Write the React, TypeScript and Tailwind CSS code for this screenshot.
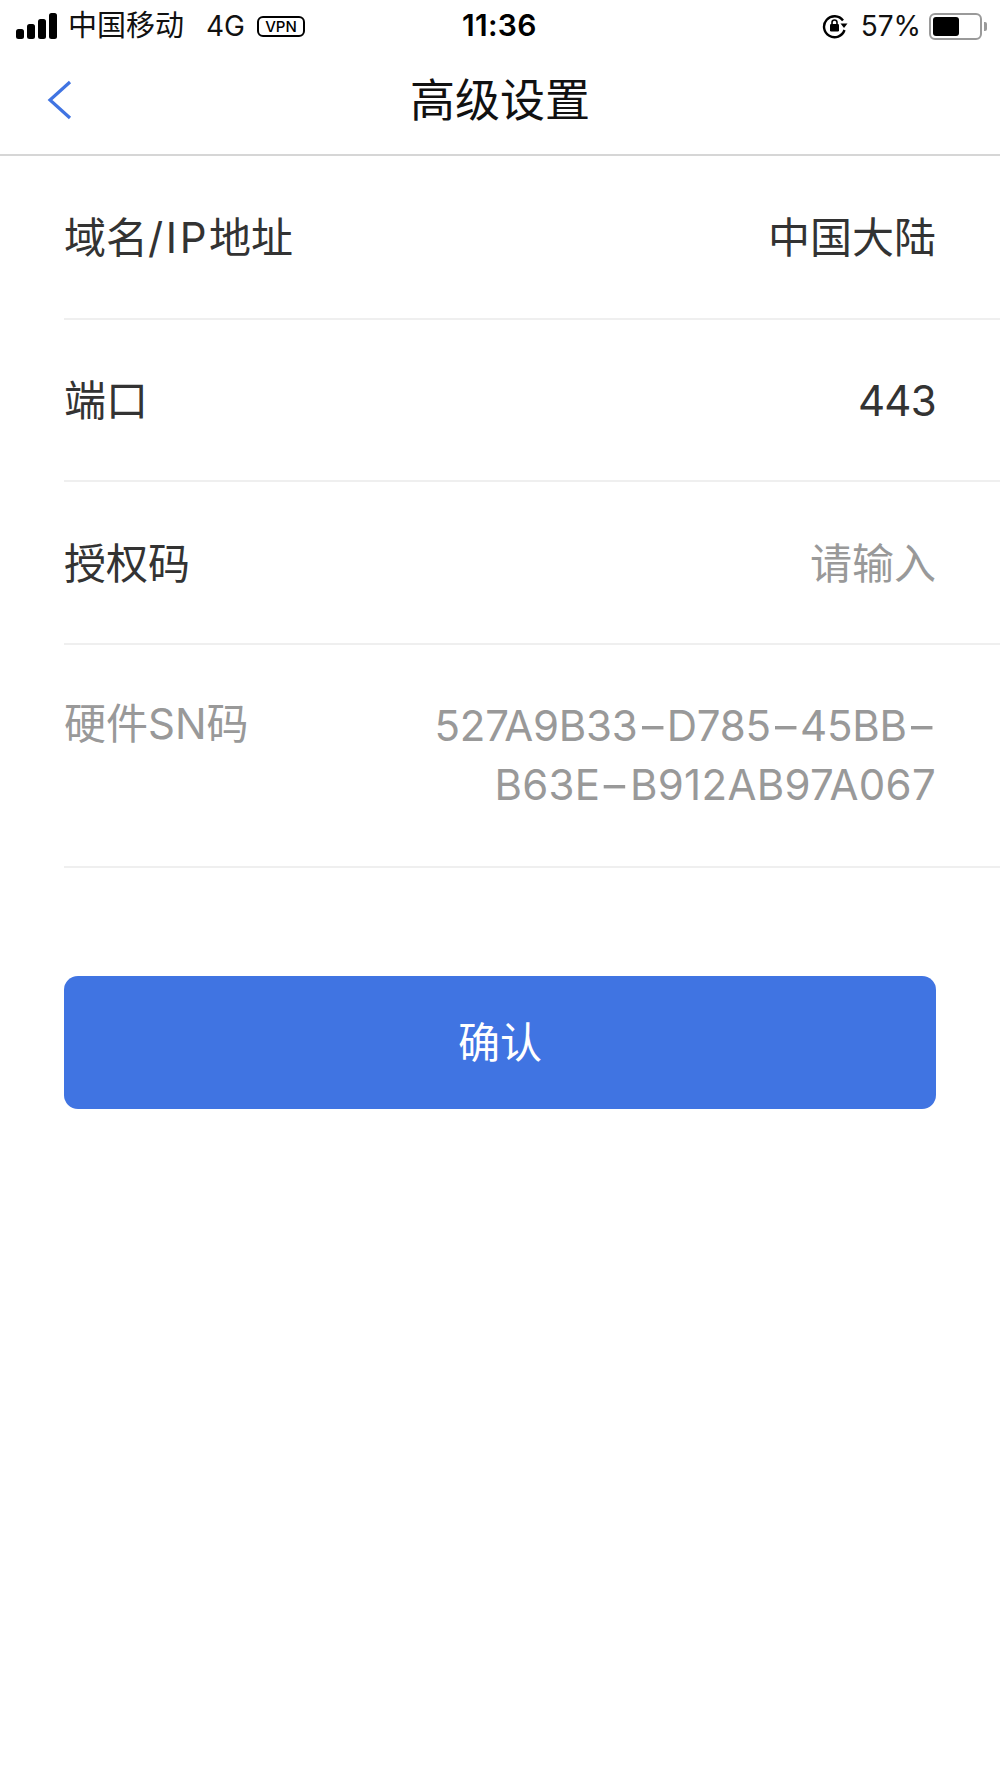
const font = "font-['Inter','Noto_Sans_CJK_SC',sans-serif]";

function Row({ label, value, valueClass = "text-[#333333]", labelClass = "text-[#333333]", h }: { label: React.ReactNode; value: React.ReactNode; valueClass?: string; labelClass?: string; h: string }) {
  return (
    <div className={`ml-[64px] flex items-center justify-between border-b-2 border-[#efefef] pr-[64px] pt-[2px] ${h}`}>
      <span className={`text-[42px] leading-[56px] ${labelClass}`}>{label}</span>
      <span className={`text-[42px] leading-[56px] ${valueClass}`}>{value}</span>
    </div>
  );
}

function Dash() {
  return <span className="mx-[5px] inline-block scale-x-[1.6]">-</span>;
}

function Signal() {
  return (
    <svg width="42" height="26" viewBox="0 0 42 26" className="block">
      <rect x="0" y="16" width="8" height="10" rx="2.5" fill="#000" />
      <rect x="11" y="11" width="8" height="15" rx="2.5" fill="#000" />
      <rect x="22" y="6" width="8" height="20" rx="2.5" fill="#000" />
      <rect x="33" y="0" width="8" height="26" rx="2.5" fill="#000" />
    </svg>
  );
}

function RotationLock() {
  return (
    <svg width="26" height="26" viewBox="0 0 26 26" className="block">
      <path d="M21 7.5A10.5 10.5 0 1 0 22.5 17" fill="none" stroke="#000" strokeWidth="2.4" />
      <path d="M18.5 10.5h7l-3.5 4.5z" fill="#000" />
      <rect x="8" y="11" width="9" height="7.5" rx="1.2" fill="#000" />
      <path d="M10 11.5V9.5a2.5 2.5 0 0 1 5 0v2" fill="none" stroke="#000" strokeWidth="1.6" />
    </svg>
  );
}

function Battery() {
  return (
    <div className="flex items-center">
      <div className="flex h-[27px] w-[53px] items-center rounded-[6px] border-2 border-[#9a9a9a] p-[2px]">
        <div className="h-full w-[26px] rounded-[3px] bg-black" />
      </div>
      <div className="ml-[2px] h-[9px] w-[3px] rounded-r-[2px] bg-[#9a9a9a]" />
    </div>
  );
}

export default function App() {
  return (
    <div className={`relative h-[1778px] w-[1000px] overflow-hidden bg-white ${font}`}>
      <div className="relative flex h-[50px] items-center justify-between pl-[16px] pr-[13px] pt-[2px] text-black">
        <div className="flex items-center">
          <Signal />
          <span className="ml-[10px] text-[29px] leading-[34px] text-[#111]">中国移动</span>
          <span className="ml-[22px] text-[28px] leading-[34px] text-[#111]">4G</span>
          <span className="ml-[12px] flex h-[21px] w-[48px] items-center justify-center rounded-[6px] border-2 border-black text-[15px] font-medium leading-none">VPN</span>
        </div>
        <span className="absolute left-[462px] top-[6px] text-[30px] font-semibold leading-[38px] tracking-[0.3px]">11:36</span>
        <div className="flex items-center">
          <RotationLock />
          <span className="ml-[13px] mr-[8px] text-[28px] leading-[34px] text-[#111]">57%</span>
          <Battery />
        </div>
      </div>

      <div className="relative flex h-[106px] items-center justify-center border-b-2 border-[#d6d6d6] pb-[2px]">
        <svg width="26" height="40" viewBox="0 0 26 40" className="absolute left-[47px] top-[30px] block">
          <path d="M23 2 L3 20 L23 38" fill="none" stroke="#4074e2" strokeWidth="3.2" />
        </svg>
        <span className="text-[45px] leading-[60px] text-[#111]">高级设置</span>
      </div>

      <Row h="h-[164px]" label={<>域名<span className="tracking-[2.6px]">/IP</span>地址</>} value="中国大陆" />
      <Row h="h-[162px]" label="端口" value={<span className="tracking-[-0.7px]">443</span>} />
      <Row h="h-[163px]" label="授权码" value="请输入" valueClass="text-[#999999]" />
      <div className="ml-[64px] flex h-[223px] items-start justify-between border-b-2 border-[#efefef] pr-[64px] pt-[51px]">
        <span className="text-[42px] leading-[56px] text-[#999999]">硬件SN码</span>
        <div className="text-right text-[42px] leading-[59px] text-[#999999]">
          <div className="tracking-[-0.2px]">527A9B33<Dash />D785<Dash />45BB<Dash /></div>
          <div className="tracking-[0.3px]">B63E<Dash />B912AB97A067</div>
        </div>
      </div>

      <div className="px-[64px] pt-[108px]">
        <button className="flex h-[133px] w-full items-center justify-center rounded-[14px] bg-[#4074e2] text-[42px] text-white">确认</button>
      </div>
    </div>
  );
}
